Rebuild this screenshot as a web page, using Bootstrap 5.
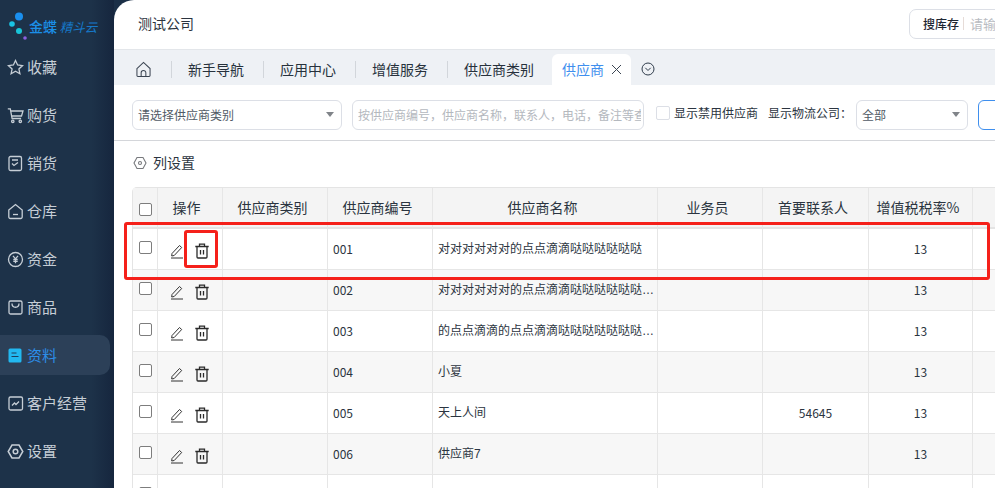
<!DOCTYPE html>
<html lang="zh"><head><meta charset="utf-8"><title>供应商</title>
<link href="https://cdn.jsdelivr.net/npm/bootstrap@5.3.0/dist/css/bootstrap.min.css" rel="stylesheet">
<style>
html,body{height:488px;overflow:hidden}
body{font-family:"Noto Sans CJK SC","Liberation Sans",sans-serif;font-size:13px;color:#2b3440;position:relative;background:#1b2f47}
.shell{height:488px;width:995px;overflow:hidden}
.side{width:114px;flex:none;background:linear-gradient(90deg,#1d3249 0,#1d3249 80%,#16263e 100%);color:#c6ced6}
.brand{height:43px;padding:13px 0 0 9px;color:#1678c8;font-size:13px}
.brand svg{flex:none;margin-top:-1px}
.brand-name{line-height:16px;margin-top:5px;white-space:nowrap;font-size:12.500px;font-style:italic}
.brand-name b{font-size:14px;font-weight:500;color:#1b8fe8;font-style:normal}
.side-item{height:48px;display:flex;align-items:center;gap:3px;padding-left:7px;font-size:15px;white-space:nowrap;width:110px}
.side-item svg{flex:none}
.side-item.on{height:40px;margin:4px 0;background:#2c4058;border-radius:0 10px 10px 0;color:#2c8ee8}
.main{flex:1;min-width:0;background:#fff;border-radius:20px 0 0 0;overflow:hidden}
.topbar{height:50px;padding:0 0 2px 24px;font-size:14px;border-bottom:1px solid #e3e6ea}
.stock{margin-left:auto;margin-right:-42px;width:128px;height:30px;border:1px solid #dcdfe6;border-radius:7px;padding-left:13px;font-size:12px;white-space:nowrap;overflow:hidden;flex:none}
.stock b{font-weight:500;color:#1f2733}
.stock i{display:block;width:1px;height:13px;background:#e6dcd8;margin:0 6px 0 4px}
.stock span{color:#b9bcc2;font-size:13px}
.tabs{height:35px;background:#eef1f5;padding:3px 0 0 22px}
.tab{font-size:14px;white-space:nowrap;color:#27313c;height:100%;display:flex;align-items:center;margin-right:19px}
.home{margin-right:20px}
.sep{width:1px;height:17px;background:#d2d6db;margin-right:16px;flex:none}
.tab-on{background:#fff;border-radius:6px 6px 0 0;color:#3f8fee;height:31px;align-self:flex-end;padding:0 9px 0 10px;gap:7px;width:79px;margin:0 10px 0 -1px}
.filters{height:56px;border-bottom:1px solid #d4d6da;padding:4px 0 0 18px;font-size:12px}
.fake-select{height:30px;border:1px solid #dcdfe6;border-radius:6px;padding:0 5px;background:#fff;color:#515a66;flex:none;font-size:12px}
.caret{width:0;height:0;border:4px solid transparent;border-top:5px solid #808489;border-bottom:0;margin-left:auto;margin-right:2px}
.kw{width:292px;margin:0 12px 0 10px;height:30px;border:1px solid #dcdfe6;border-radius:6px;padding-left:5px;color:#b4b8be;font-size:12px;white-space:nowrap;overflow:hidden;flex:none}
.kw span{display:block;width:283px;overflow:hidden}
.box{width:14px;height:14px;border:1px solid #dcdfe6;border-radius:2px;flex:none;background:#fff;margin-top:-4px}
.lbl{white-space:nowrap;color:#2b3440;flex:none;margin-top:-4px}
.lbl-co{margin-left:10px;margin-right:4px}
.query{width:60px;height:30px;border:1px solid #3f8fee;border-radius:6px;margin-left:10px;flex:none}
.colset{height:46px;padding:0 0 3px 19px;font-size:14px;gap:6px}
.grid-wrap{padding-left:18px;width:900px}
.sheet{table-layout:fixed;width:880px;border-collapse:separate;border-spacing:0;margin:0;border-top:1px solid #e4e4e4;border-left:1px solid #e4e4e4;border-top-left-radius:5px;font-size:12px}
.sheet th,.sheet td{border-right:1px solid #e6e6e6;border-bottom:1px solid #e6e6e6;padding:0 5px;height:41px;vertical-align:middle;white-space:nowrap;overflow:hidden;text-overflow:ellipsis;background:#fff;color:#2b3440}
.sheet th{background:#f4f4f4;font-weight:400;font-size:14px;text-align:center;height:41px;border-bottom:2px solid #e4e4e4;padding:0 9px 0 4px}
.sheet th:first-child{padding:0 5px}
.sheet th.opth{padding-right:11px}
.sheet tr.alt td{background:#f7f7f7}
.sheet td.name{font-family:"Liberation Sans","Noto Sans CJK SC",sans-serif;padding-right:1px}
.cb{display:block;width:13px;height:13px;border:1px solid #7d7d7d;border-radius:2px;margin:-3px 0 0 1px;background:#fff}
.sheet th .cb{margin-top:3px}
.ops{display:flex;gap:11px;padding-left:7px;margin-top:4px;align-items:center}
.tax{text-align:center}
.redbox{position:absolute;border:3px solid #f5201a;border-radius:3px;pointer-events:none}
.r1{left:124px;top:222px;width:866px;height:58px}
.r2{left:184px;top:230px;width:34px;height:38px}
</style></head><body>
<div class="shell d-flex">
<aside class="side">
<div class="brand d-flex align-items-start">
<svg width="20" height="30" viewBox="0 0 20 30"><circle cx="10" cy="4.500" r="4" fill="#1a8fee"/><circle cx="3" cy="12" r="2.800" fill="#19c4e4"/><circle cx="10" cy="19" r="3" fill="#19c4d8"/><circle cx="16" cy="26" r="1.800" fill="#8a5fe0"/></svg>
<div class="brand-name"><b>金蝶</b> 精斗云</div>
</div>
<div>
<div class="side-item"><svg width="17" height="17" viewBox="0 0 17 17" fill="none" stroke="#c6ced6" stroke-width="1.300"><path d="M8.500 1.500 10.600 6l4.900.6-3.600 3.300 1 4.800-4.400-2.500-4.400 2.500 1-4.800L1.500 6.600 6.400 6z"/></svg>收藏</div>
<div class="side-item"><svg width="17" height="17" viewBox="0 0 17 17" fill="none" stroke="#c6ced6" stroke-width="1.300"><path d="M.8 1.800h2.500l1.800 9.700h9M4 4h12l-1.500 5H5"/><circle cx="5.800" cy="14.300" r="1.200"/><circle cx="13.300" cy="14.300" r="1.200"/></svg>购货</div>
<div class="side-item"><svg width="17" height="17" viewBox="0 0 17 17" fill="none" stroke="#c6ced6" stroke-width="1.300"><rect x="2" y="1.500" width="12.500" height="14" rx="1.500"/><path d="M5 5h6M5 8.500l2 2 4-3"/></svg>销货</div>
<div class="side-item"><svg width="17" height="17" viewBox="0 0 17 17" fill="none" stroke="#c6ced6" stroke-width="1.300"><path d="M1.800 7 8.500 1.500 15.200 7v7a1.500 1.500 0 0 1-1.500 1.500H3.300A1.500 1.500 0 0 1 1.800 14z"/><path d="M6 11.500h5"/></svg>仓库</div>
<div class="side-item"><svg width="17" height="17" viewBox="0 0 17 17" fill="none" stroke="#c6ced6" stroke-width="1.300"><circle cx="8.500" cy="8.500" r="7"/><path d="M6 4.800l2.500 3 2.500-3M8.500 7.800v4.500M6.300 8.500h4.400M6.300 10.400h4.400"/></svg>资金</div>
<div class="side-item"><svg width="17" height="17" viewBox="0 0 17 17" fill="none" stroke="#c6ced6" stroke-width="1.300"><rect x="2" y="2" width="13" height="13" rx="1.500"/><path d="M5 4.500c0 5 7 5 7 0"/></svg>商品</div>
<div class="side-item on"><svg width="17" height="17" viewBox="0 0 17 17"><rect x="1.500" y="1.500" width="13" height="14" rx="1.500" fill="#22b8f0"/><path d="M4.500 6h5M4.500 9.500h7" stroke="#1d3d5c" stroke-width="1.200"/></svg>资料</div>
<div class="side-item"><svg width="17" height="17" viewBox="0 0 17 17" fill="none" stroke="#c6ced6" stroke-width="1.300"><rect x="2" y="2" width="13.500" height="13" rx="1.500"/><path d="M5 10.500 7.500 8l1.500 1.500 3-3"/></svg>客户经营</div>
<div class="side-item"><svg width="17" height="17" viewBox="0 0 17 17" fill="none" stroke="#c6ced6" stroke-width="1.500"><path d="M5 2h7l3.800 6.500L12 15H5L1.200 8.500z"/><circle cx="8.500" cy="8.500" r="2.300"/></svg>设置</div>
</div>
</aside>
<main class="main">
<div class="topbar d-flex align-items-center"><span>测试公司</span>
<div class="stock d-flex align-items-center"><b>搜库存</b><i></i><span>请输入</span></div></div>
<div class="tabs d-flex align-items-center">
<div class="tab home"><svg width="15" height="17" viewBox="0 0 16 17" fill="none" stroke="#3b4552" stroke-width="1.100"><path d="M1 7.500 8 1l7 6.500V15a1 1 0 0 1-1 1H2a1 1 0 0 1-1-1z"/><path d="M5.500 16v-4a2.500 2.500 0 0 1 5 0v4"/></svg></div>
<div class="sep"></div><div class="tab">新手导航</div>
<div class="sep"></div><div class="tab">应用中心</div>
<div class="sep"></div><div class="tab">增值服务</div>
<div class="sep"></div><div class="tab">供应商类别</div>
<div class="tab tab-on">供应商<svg width="11" height="11" viewBox="0 0 11 11" stroke="#3b4552" stroke-width="1"><path d="M1 1l9 9M10 1l-9 9"/></svg></div>
<svg width="14" height="14" viewBox="0 0 14 14" fill="none" stroke="#2f3c4b" stroke-width="1"><circle cx="7" cy="7" r="6"/><path d="M4.300 5.800 7 8.500l2.700-2.700"/></svg>
</div>
<div class="filters d-flex align-items-center">
<div class="fake-select d-flex align-items-center" style="width:210px">请选择供应商类别<span class="caret"></span></div>
<div class="kw d-flex align-items-center"><span>按供应商编号，供应商名称，联系人，电话，备注等查询</span></div>
<span class="box"></span><span class="lbl ms-1">显示禁用供应商</span><span class="lbl lbl-co">显示物流公司：</span>
<div class="fake-select d-flex align-items-center" style="width:112px">全部<span class="caret"></span></div>
<div class="query"></div>
</div>
<div class="colset d-flex align-items-center"><svg width="14" height="14" viewBox="0 0 14 14" fill="none" stroke="#77797d" stroke-width="1.100"><path d="M4 1.500h6L13 7l-3 5.500H4L1 7z"/><circle cx="7" cy="7" r="1.500"/></svg><span>列设置</span></div>
<div class="grid-wrap">
<table class="sheet">
<colgroup><col style="width:25px"><col style="width:65px"><col style="width:105px"><col style="width:105px"><col style="width:225px"><col style="width:105px"><col style="width:106px"><col style="width:104px"><col style="width:40px"></colgroup>
<thead><tr><th><span class="cb"></span></th><th class="opth">操作</th><th>供应商类别</th><th>供应商编号</th><th>供应商名称</th><th>业务员</th><th>首要联系人</th><th>增值税税率%</th><th></th></tr></thead>
<tbody id="rows"></tbody></table>
</div>
</main>
</div>
<div class="redbox r1"></div><div class="redbox r2"></div>
<script>
const data=[["001","对对对对对对的点点滴滴哒哒哒哒哒哒",""],["002","对对对对对对的点点滴滴哒哒哒哒哒哒哒哒哒哒哒",""],["003","的点点滴滴的点点滴滴哒哒哒哒哒哒哒哒哒哒哒哒",""],["004","小夏",""],["005","天上人间","54645"],["006","供应商7",""],["007","",""]];
const ops='<div class="ops"><svg width="14" height="16" viewBox="0 0 14 16" fill="none" stroke="#333" stroke-width="1"><path d="M2 10.500 9.500 2.500l2.200 2-7.500 8-2.500.5zM1 15h12"/></svg><svg width="14" height="16" viewBox="0 0 14 16" fill="none" stroke="#2a2a2a" stroke-width="1.300"><path d="M.3 3.500h13.400M4.500 3.500V1.200h5v2.300M2 3.500V14a1 1 0 0 0 1 1h8a1 1 0 0 0 1-1V3.500M5.500 7v4.500M8.500 7v4.500"/></svg></div>';
document.getElementById('rows').innerHTML=data.map((r,i)=>`<tr class="${i%2?'alt':''}"><td><span class="cb"></span></td><td>${ops}</td><td></td><td>${r[0]}</td><td class="name">${r[1]}</td><td></td><td class="tax">${r[2]}</td><td class="tax">${r[0]=="007"?"":"13"}</td><td></td></tr>`).join('');
</script>
<script src="https://cdn.jsdelivr.net/npm/bootstrap@5.3.0/dist/js/bootstrap.bundle.min.js"></script>
</body></html>
